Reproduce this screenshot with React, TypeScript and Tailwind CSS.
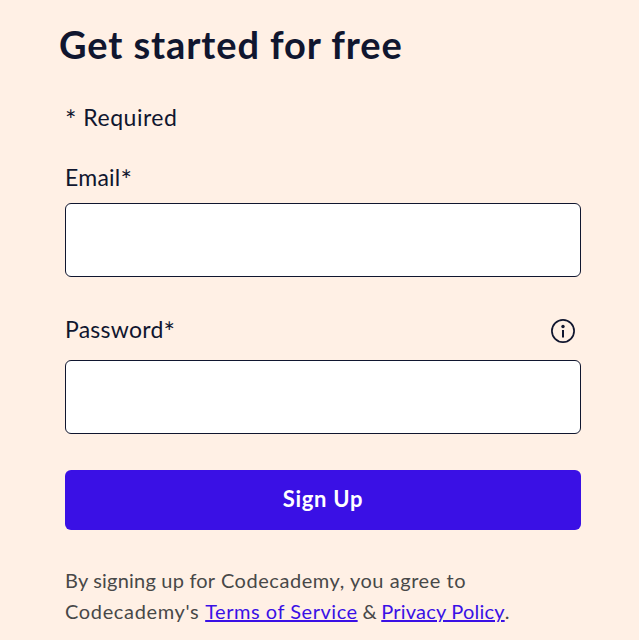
import { useId } from "react";

const Asterisk = () => <span className="align-[-4px] text-[27px] leading-none">*</span>;

const Field = ({ label, type, info }: { label: string; type: string; info?: boolean }) => {
  const id = useId();

  return (
    <div className={info ? "space-y-[14px]" : "space-y-[9px]"}>
      <div className="flex h-8 items-center justify-between pr-1.5">
        <label htmlFor={id} className="h-8 text-[23px] leading-[30px] tracking-[0.25px]">
          {label}<Asterisk />
        </label>
        {info && (
          <button type="button" aria-label="Password requirements" className="mt-px">
            <svg width="24" height="24" viewBox="0 0 24 24" fill="none" stroke="currentColor" strokeWidth="1.7">
              <circle cx="12" cy="12" r="11.1" />
              <path d="M12 11V18.5" strokeWidth="2" />
              <circle cx="12" cy="7.5" r="1.7" fill="currentColor" stroke="none" />
            </svg>
          </button>
        )}
      </div>
      <input id={id} type={type} className="block h-[74px] w-full rounded-[6px] border border-[#10162f] bg-white px-4 text-[22px]" />
    </div>
  );
};

export default function App() {
  return (
    <main className="h-[640px] w-[639px] overflow-hidden bg-[#fff0e5] pt-[19px] pl-[59px] font-['Lato',sans-serif] text-[#10162f]">
      <h1 className="h-[51px] text-[38px] leading-[50px] font-bold tracking-[0.9px] whitespace-nowrap">Get started for free</h1>
      <form className="ml-1.5 w-[516px]">
        <p className="mt-8 h-8 text-[23px] leading-[30px] tracking-[0.5px]">
          <Asterisk /> Required
        </p>
        <div className="mt-7">
          <Field label="Email" type="email" />
        </div>
        <div className="mt-[37px]">
          <Field label="Password" type="password" info />
        </div>
        <button type="button" className="mt-9 h-[60px] w-full rounded-[6px] bg-[#3a10e5] pb-[3px] text-[22px] font-bold tracking-[0.75px] text-white">
          Sign Up
        </button>
        <p className="mt-[35px] text-xl leading-[31px] tracking-[0.43px] whitespace-nowrap text-[#484848]">
          <span className="tracking-[0.2px]">By signing up for</span> <span className="tracking-[0.55px]">Codecademy, you agree to</span>
          <br />
          <span className="tracking-[0.65px]">Codecademy's </span>
          <a href="#" className="tracking-[0.53px] text-[#3a10e5] underline decoration-2">Terms of Service</a>
          <span className="tracking-[-0.3px]"> &amp; </span>
          <a href="#" className="tracking-[0.2px] text-[#3a10e5] underline decoration-2">Privacy Policy</a>.
        </p>
      </form>
    </main>
  );
}
